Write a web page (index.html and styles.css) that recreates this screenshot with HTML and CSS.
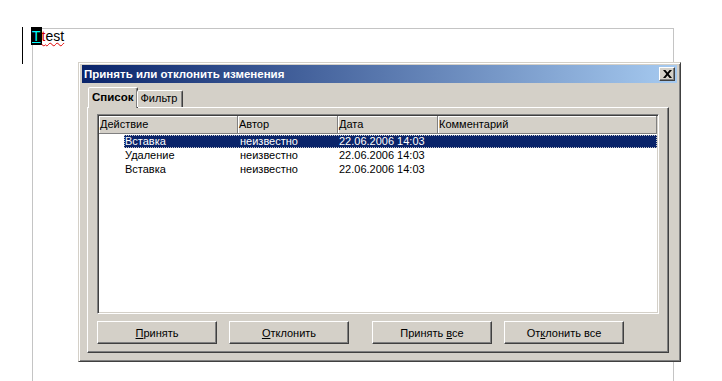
FILE: index.html
```html
<!DOCTYPE html>
<html lang="ru">
<head>
    <meta charset="UTF-8">
    <title>Принять или отклонить изменения</title>
    <link rel="stylesheet" href="styles.css">
</head>
<body>
    <div class="doc">
        <div class="margin-mark"></div>
        <div class="page">
            <p class="line"><span class="sel">T</span><span class="spell"><span class="ins">t</span>est</span></p>
        </div>
    </div>

    <!-- Окно диалога поверх документа -->
    <div class="dialog">
        <div class="titlebar">
            <span class="title">Принять или отклонить изменения</span>
            <span class="close">
                <svg width="9" height="8" viewBox="0 0 9 8"><path d="M0 0h2.4L4.5 2.6 6.6 0H9L5.7 4 9 8H6.6L4.5 5.4 2.4 8H0l3.3-4z" fill="#000"/></svg>
            </span>
        </div>

        <div class="content">
            <div class="tabs">
                <span class="tab active">Список</span>
                <span class="tab">Фильтр</span>
            </div>

            <div class="panel">
                <div class="listbox">
                    <div class="list-head">
                        <span>Действие</span>
                        <span>Автор</span>
                        <span>Дата</span>
                        <span>Комментарий</span>
                    </div>
                    <div class="row selected">
                        <span>Вставка</span>
                        <span>неизвестно</span>
                        <span>22.06.2006 14:03</span>
                        <span></span>
                    </div>
                    <div class="row">
                        <span>Удаление</span>
                        <span>неизвестно</span>
                        <span>22.06.2006 14:03</span>
                        <span></span>
                    </div>
                    <div class="row">
                        <span>Вставка</span>
                        <span>неизвестно</span>
                        <span>22.06.2006 14:03</span>
                        <span></span>
                    </div>
                </div>

                <div class="buttons">
                    <button class="btn"><u>П</u>ринять</button>
                    <button class="btn"><u>О</u>тклонить</button>
                    <button class="btn sep">Принять <u>в</u>се</button>
                    <button class="btn">От<u>к</u>лонить все</button>
                </div>
            </div>
        </div>
    </div>
</body>
</html>
```

FILE: styles.css
```css
* {
    margin: 0;
    padding: 0;
    box-sizing: border-box;
}

body {
    width: 722px;
    height: 381px;
    overflow: hidden;
    background-color: #fff;
    font-family: "Liberation Sans", Arial, sans-serif;
    font-size: 11px;
    color: #000;
    position: relative;
}

/* Документ на заднем плане */
.doc {
    display: flex;
    align-items: flex-start;
    padding: 27px 0 0 22px;
}

.margin-mark {
    width: 1px;
    height: 37px;
    background-color: #000;
    margin-right: 9px;
}

.page {
    margin-top: 1px;
    width: 642px;
    height: 360px;
    border: 1px solid #c4c4c4;
    border-bottom: none;
}

.line {
    margin: -2px 0 0 -2px;
    font-size: 14px;
    line-height: 18px;
}

.sel {
    display: inline-block;
    height: 18px;
    padding: 0 1px;
    background-color: #000;
    color: #00ffff;
    text-decoration: underline;
}

.spell {
    text-decoration: underline wavy #e00000;
    text-decoration-thickness: 1px;
}

.ins {
    color: #d00000;
}

/* Диалог */
.dialog {
    position: absolute;
    left: 78px;
    top: 62px;
    width: 603px;
    height: 300px;
    background-color: #d4d0c8;
    border: 1px solid;
    border-color: #d4d0c8 #404040 #404040 #d4d0c8;
    box-shadow: inset 1px 1px #fff, inset -1px -1px #808080;
    padding: 2px 3px 3px 3px;
    display: flex;
    flex-direction: column;
}

.titlebar {
    height: 18px;
    background: linear-gradient(to right, #0a246a, #a6caf0);
    color: #fff;
    font-weight: bold;
    font-size: 11.5px;
    display: flex;
    align-items: center;
    justify-content: space-between;
    padding-left: 2px;
}

.close {
    width: 16px;
    height: 14px;
    margin-right: 2px;
    background-color: #d4d0c8;
    border: 1px solid;
    border-color: #fff #404040 #404040 #fff;
    box-shadow: inset -1px -1px #808080;
    display: flex;
    align-items: center;
    justify-content: center;
}

.content {
    flex: 1;
    padding: 5px 8px 5px 5px;
    display: flex;
    flex-direction: column;
}

.tabs {
    display: flex;
    align-items: flex-end;
    height: 19px;
    padding-left: 1px;
    position: relative;
    z-index: 1;
}

.tab {
    height: 17px;
    line-height: 14px;
    padding: 0 5px 0 3px;
    border: 1px solid;
    border-bottom: none;
    border-color: #fff #404040 transparent #fff;
    box-shadow: inset -1px 0 #808080;
    border-radius: 2px 2px 0 0;
    background-color: #d4d0c8;
}

.tab.active {
    height: 21px;
    margin-bottom: -1px;
    padding: 2px 3px 0 3px;
    font-weight: bold;
    font-size: 11.5px;
    margin-right: -1px;
}

.panel {
    flex: 1;
    border: 1px solid;
    border-color: #fff #404040 #404040 #fff;
    box-shadow: inset -1px -1px #808080;
    padding: 6px 9px 8px 9px;
    display: flex;
    flex-direction: column;
}

.listbox {
    height: 200px;
    background-color: #fff;
    border: 1px solid;
    border-color: #808080 #fff #fff #808080;
    box-shadow: inset 1px 1px #404040, inset -1px -1px #d4d0c8;
    padding: 1px;
}

.list-head {
    display: grid;
    grid-template-columns: 139px 100px 100px 1fr;
    height: 18px;
    background-color: #d4d0c8;
    border-bottom: 1px solid #808080;
}

.list-head span {
    padding: 2px 0 0 1px;
    border-right: 1px solid #808080;
    box-shadow: inset 1px 1px #fff;
}

.row {
    display: grid;
    grid-template-columns: 114px 100px 100px 1fr;
    height: 13px;
    line-height: 13px;
    margin: 0 0 1px 25px;
}

.row span {
    padding-left: 1px;
    white-space: nowrap;
}

.row span:nth-child(2) {
    padding-left: 2px;
}

.row.selected {
    margin-top: 1px;
    background-color: #0a246a;
    color: #fff;
    outline: 1px dotted #c8c8c8;
    outline-offset: -1px;
}

.buttons {
    display: flex;
    gap: 12px;
    margin-top: 7px;
}

.btn {
    width: 120px;
    height: 23px;
    font-family: "Liberation Sans", Arial, sans-serif;
    font-size: 11px;
    color: #000;
    background-color: #d4d0c8;
    border: 1px solid;
    border-color: #fff #404040 #404040 #fff;
    box-shadow: inset -1px -1px #808080;
}

.btn.sep {
    margin-left: 11px;
}
```
